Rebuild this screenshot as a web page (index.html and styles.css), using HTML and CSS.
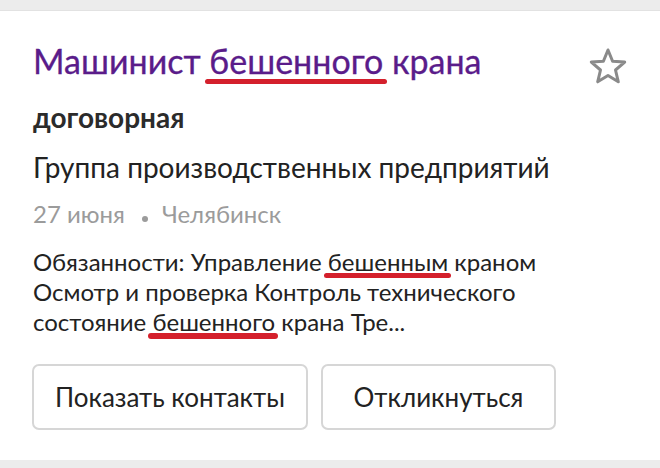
FILE: index.html
```html
<!DOCTYPE html>
<html lang="ru">
<head>
<meta charset="utf-8">
<link rel="stylesheet" href="styles.css">
</head>
<body>
<div class="card">
  <div class="head">
    <h1 class="title">Машинист <span class="mark mark-title">бешенного</span> крана</h1>
    <svg class="star" viewBox="0 0 40 38" width="40" height="38"><path d="M20 3 L24.6 14.2 L36.7 15.1 L27.5 23 L30.3 34.8 L20 28.4 L9.7 34.8 L12.5 23 L3.3 15.1 L15.4 14.2 Z" fill="none" stroke="#8a8a8a" stroke-width="3" stroke-linejoin="round"/></svg>
  </div>
  <div class="salary">договорная</div>
  <div class="company">Группа производственных предприятий</div>
  <div class="meta">27 июня<span class="dot"></span>Челябинск</div>
  <p class="desc">Обязанности: Управление <span class="mark">бешенным</span> краном<br>Осмотр и проверка Контроль технического<br>состояние <span class="mark mark-low">бешенного</span> крана Тре...</p>
  <div class="actions">
    <button class="btn btn-wide">Показать контакты</button>
    <button class="btn btn-narrow">Откликнуться</button>
  </div>
</div>
</body>
</html>
```
FILE: styles.css
```css
html, body { margin: 0; padding: 0; }
body {
  background: #ececec;
  font-family: Lato, "Open Sans", sans-serif;
  width: 660px;
  height: 468px;
  overflow: hidden;
}
.card {
  margin-top: 10px;
  height: 450px;
  background: #fff;
  padding: 0 0 0 33px;
  box-sizing: border-box;
  border-top: 1px solid #e2e2e2;
}
.head {
  display: flex;
  justify-content: space-between;
  align-items: flex-start;
  padding-top: 30px;
  padding-right: 32px;
}
.title {
  margin: 0;
  font-size: 34px;
  font-weight: 400;
  color: #5a1c8a;
  line-height: 40px;
  -webkit-text-stroke: 0.3px #5a1c8a;
}
.star { margin-top: 6px; }
.mark { position: relative; }
.mark::after {
  content: "";
  position: absolute;
  left: -4px;
  right: -3px;
  bottom: -2px;
  height: 5px;
  border-radius: 3px;
  background: #d4202c;
}
.mark-title::after { left: -4px; right: -4px; bottom: -3px; height: 5px; }
.mark-low::after { bottom: -3px; height: 6px; }
.salary {
  margin-top: 15px;
  font-size: 28px;
  font-weight: 700;
  color: #2b2b2b;
  line-height: 34px;
}
.company {
  margin-top: 16px;
  font-size: 28px;
  color: #222;
  line-height: 34px;
}
.meta {
  margin-top: 15px;
  font-size: 24px;
  color: #9b9b9b;
  line-height: 30px;
}
.dot {
  display: inline-block;
  width: 6px;
  height: 6px;
  border-radius: 50%;
  background: #9b9b9b;
  margin: 0 14px 0 17px;
  vertical-align: 1px;
}
.desc {
  margin: 18px 0 0;
  font-size: 24px;
  color: #222;
  line-height: 30px;
}
.actions {
  display: flex;
  gap: 13px;
  margin-top: 27px;
  margin-left: -1px;
}
.btn {
  height: 66px;
  background: #fff;
  border: 2px solid #d6d6d6;
  border-radius: 7px;
  font-family: Lato, "Open Sans", sans-serif;
  font-size: 26px;
  color: #222;
  padding: 0;
}
.btn-wide { width: 276px; }
.btn-narrow { width: 235px; }
```
